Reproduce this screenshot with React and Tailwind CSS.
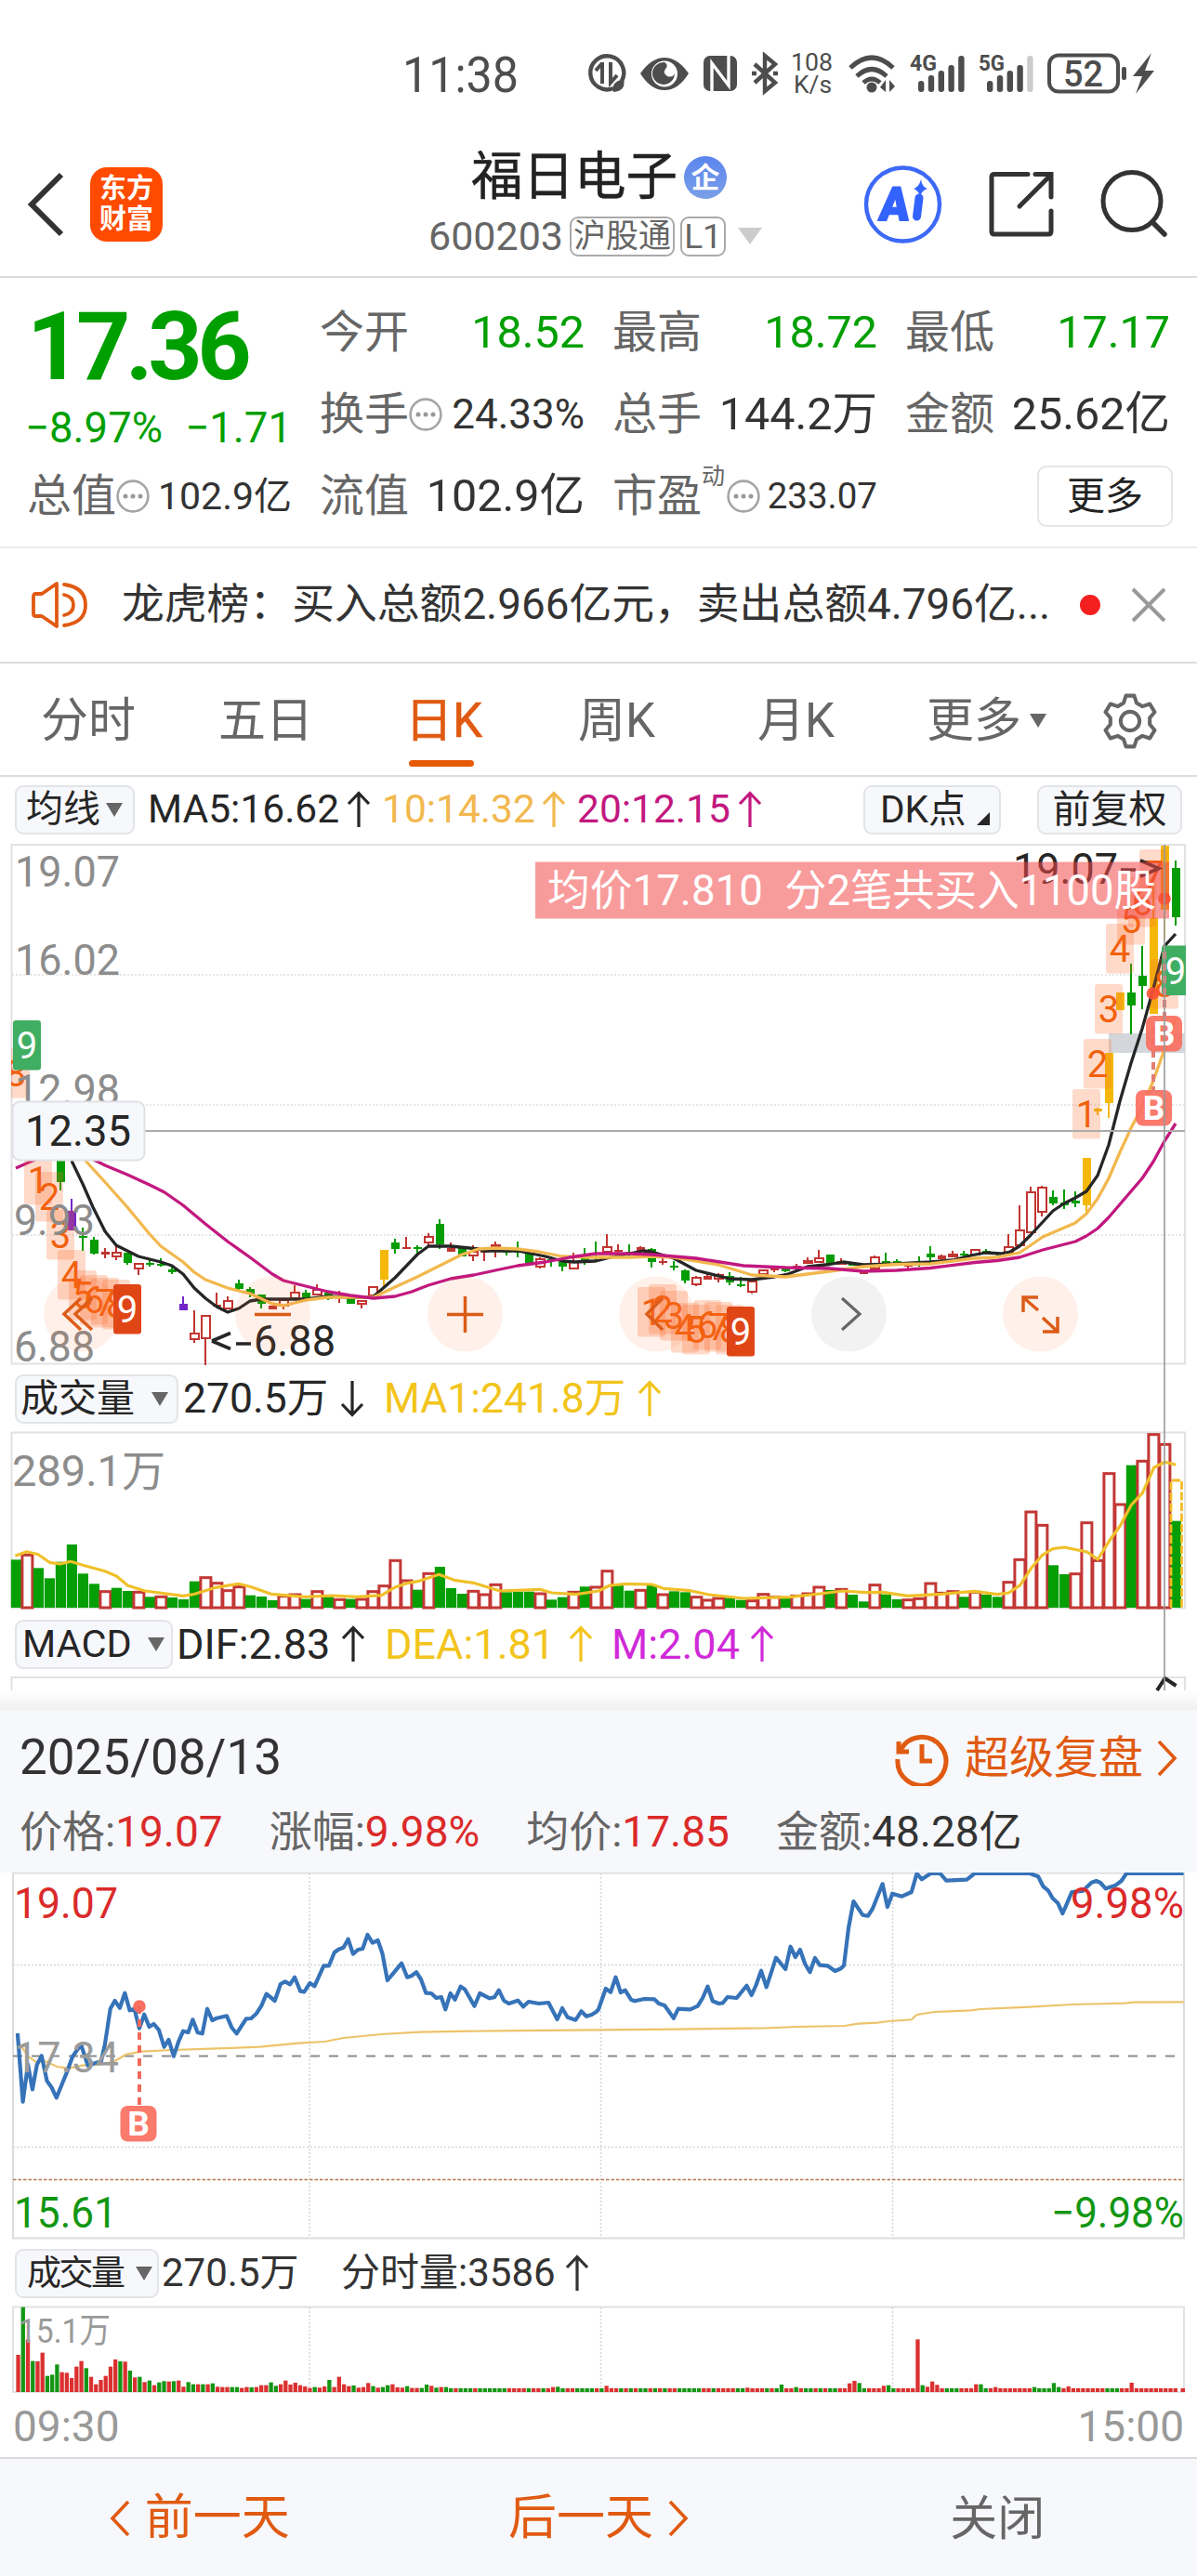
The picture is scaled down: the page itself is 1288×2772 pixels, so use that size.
import React from "react";

const FONT = "[font-family:Roboto,'Noto_Sans_CJK_SC',sans-serif]";

/* ---------- small pieces ---------- */

const Caret = ({ className = "" }) => (
  <svg className={className} width="18" height="15" viewBox="0 0 18 15">
    <path d="M0 0H18L9 15Z" fill="#666" />
  </svg>
);

const Arrow = ({ down, className = "" }) => (
  <svg className={className} width="26" height="40" viewBox="0 0 26 40" fill="none" stroke="currentColor" strokeWidth="3.2">
    {down ? <path d="M13 1V37M2 26L13 37.5L24 26" /> : <path d="M13 39V3M2 14L13 2.5L24 14" />}
  </svg>
);

const Chevron = ({ left }) => (
  <svg width="22" height="40" viewBox="0 0 22 40" fill="none" stroke="#e05a12" strokeWidth="3.6">
    {left ? <path d="M20 2L3 20L20 38" /> : <path d="M2 2L19 20L2 38" />}
  </svg>
);

const Dots = () => (
  <svg width="36" height="36" viewBox="0 0 36 36" className="shrink-0">
    <circle cx="18" cy="18" r="16.4" fill="none" stroke="#a5a5a5" strokeWidth="2.6" />
    <circle cx="10" cy="18" r="2.5" fill="#999" />
    <circle cx="18" cy="18" r="2.5" fill="#999" />
    <circle cx="26" cy="18" r="2.5" fill="#999" />
  </svg>
);

const Chip = ({ className = "", children }) => (
  <div className={"flex items-center rounded-[9px] border-2 border-[#e2e4e8] bg-[#f7f8fb] text-[#262626] " + className}>
    {children}
  </div>
);

/* ---------- status bar and header ---------- */

function Signal({ x, last }) {
  const tops = [87, 81, 76, 70, 60];
  return tops.map((t, i) => (
    <rect key={i} x={x + i * 10.8} y={t} width="6.4" height={99 - t} rx="3" fill={i === 4 && last ? last : "#4d4d4d"} />
  ));
}

function StatusBar() {
  return (
    <div className="flex h-[130px] w-full">
      <svg width="1288" height="130" viewBox="0 0 1288 130" fontFamily="Roboto, sans-serif" fill="#4d4d4d">
        <text x="433" y="99" fontSize="53" textLength="125" lengthAdjust="spacingAndGlyphs">11:38</text>
        <g fill="none" stroke="#4d4d4d" strokeWidth="4.4">
          <path d="M660 95A18 18 0 1 1 669 87" />
          <path d="M648 67V90M648 68L641 76M657 67V89L664 81" strokeWidth="4" />
        </g>
        <path d="M660 99Q657 88 671 85Q674 98 660 99Z" />
        <path d="M689 79Q701 62 715 62T741 79Q730 97 715 97T689 79Z" />
        <circle cx="715" cy="79.500" r="14" fill="#fff" />
        <path d="M715 67A12 12 0 1 0 726 79Q724 84 718 82Q712 78 717 73Q719 69 715 67Z" />
        <rect x="757" y="60" width="36" height="38" rx="7" />
        <path d="M766 98V68L784 92V60" fill="none" stroke="#fff" strokeWidth="3.4" />
        <path d="M812 69L834 89L823 98V60L834 69L812 89M809 79H814M832 79H837" fill="none" stroke="#4d4d4d" strokeWidth="4.4" />
        <text x="851" y="76" fontSize="25.500" textLength="45" lengthAdjust="spacingAndGlyphs">108</text>
        <text x="854" y="100" fontSize="25" textLength="41" lengthAdjust="spacingAndGlyphs">K/s</text>
        <g fill="none" stroke="#4d4d4d" strokeWidth="5">
          <path d="M915 73Q938 51 961 73" />
          <path d="M922 82Q938 67 954 82" />
          <path d="M929 89Q938 81 947 89" />
        </g>
        <circle cx="938" cy="94" r="5.500" />
        <path d="M947 94L953 86V99ZM957 86V99L963 93Z" />
        <text x="979" y="76" fontSize="23" fontWeight="700" textLength="29" lengthAdjust="spacingAndGlyphs">4G</text>
        <Signal x={988} />
        <text x="1053" y="76" fontSize="23" fontWeight="700" textLength="28" lengthAdjust="spacingAndGlyphs">5G</text>
        <Signal x={1062} last="#cccccc" />
        <rect x="1129" y="59.500" width="74" height="39" rx="10" fill="none" stroke="#4d4d4d" strokeWidth="4" />
        <text x="1144" y="93" fontSize="38" fontWeight="500" textLength="43" lengthAdjust="spacingAndGlyphs">52</text>
        <rect x="1207" y="72" width="5" height="14" rx="2" />
        <path d="M1239 57L1219 82H1229L1222 101L1242 76H1232Z" />
      </svg>
    </div>
  );
}

function Header() {
  return (
    <div className="flex h-[169px] items-center border-b-2 border-[#dcdcdc]">
      <svg className="mt-[12px] ml-[28px]" width="42" height="70" viewBox="0 0 42 70" fill="none" stroke="#333" strokeWidth="6">
        <path d="M38 3L6 35L38 67" />
      </svg>
      <div className="mt-[12px] ml-[27px] flex h-[80px] w-[78px] flex-col items-center justify-center rounded-[18px] bg-[#ff4b00] text-[29px] leading-[33px] font-bold text-white">
        <span>东方</span>
        <span>财富</span>
      </div>
      <div className="ml-[286px] flex w-[365px] flex-col">
        <div className="mt-[4px] ml-[46px] flex h-[76px] items-center">
          <span className="text-[55.500px] leading-none text-[#222] [-webkit-text-stroke:0.5px_#222]">福日电子</span>
          <span className="ml-[7px] flex h-[46px] w-[46px] items-center justify-center rounded-full bg-linear-to-b from-[#5b85ee] to-[#7a9fe6] text-[31px] leading-none font-bold text-white">企</span>
        </div>
        <div className="mt-[1px] flex h-[48px] items-center text-[#666]">
          <span className="text-[43px] leading-none">600203</span>
          <span className="ml-[7px] flex h-[43px] w-[113px] items-center justify-center rounded-[9px] border-2 border-[#aaa] text-[35px] leading-none">沪股通</span>
          <span className="ml-[6px] flex h-[43px] w-[49px] items-center justify-center rounded-[9px] border-2 border-[#aaa] text-[37px] leading-none">L1</span>
          <svg className="ml-[13px]" width="26" height="18" viewBox="0 0 26 18"><path d="M0 0H26L13 18Z" fill="#ccc" /></svg>
        </div>
      </div>
      <svg className="mt-[12px] ml-[101px]" width="340" height="90" viewBox="925 175 340 90" fill="none">
        <circle cx="969.500" cy="220" r="39.500" stroke="#3d69f6" strokeWidth="4.400" />
        <text transform="translate(943 237) skewX(-6)" fontSize="50" fontWeight="900" fill="#3363ff" stroke="#3363ff" strokeWidth="2" strokeLinejoin="round" fontFamily="Roboto, sans-serif" textLength="32" lengthAdjust="spacingAndGlyphs">A</text>
        <path d="M987 213L984.500 233" stroke="#3363ff" strokeWidth="9" strokeLinecap="round" />
        <path d="M989 193Q990 201 996 203Q990 205 988 211Q986 205 981 203Q987 201 989 193Z" fill="#3363ff" />
        <path d="M1104 187.500H1068Q1065 187.500 1065 190.500V249Q1065 252 1068 252H1126Q1129 252 1129 249V227M1112 187.500H1129V212M1129 188L1095 222" stroke="#333" strokeWidth="5" strokeLinecap="round" />
        <circle cx="1216" cy="216.500" r="31" stroke="#333" strokeWidth="5" />
        <path d="M1238 239L1251 252" stroke="#333" strokeWidth="5.500" strokeLinecap="round" />
      </svg>
    </div>
  );
}

/* ---------- quote ---------- */

const Label = ({ children }) => <span className="text-[48px] leading-none text-[#666]">{children}</span>;
const Row = ({ children, className = "" }) => <div className={"flex h-[88px] items-center justify-between " + className}>{children}</div>;

function Quote() {
  return (
    <div className="grid h-[291px] grid-cols-4 gap-x-[30px] border-b-2 border-[#ececec] px-[29px] pt-[15px] text-[48.500px] leading-none text-[#333]">
      <div className="flex flex-col">
        <div className="flex h-[118px] items-center text-[102px] font-bold tracking-[-5.500px] text-[#009f00]">
          <span>17.36</span>
        </div>
        <div className="-ml-[2px] flex h-[58px] items-center justify-between text-[45.500px] text-[#009f00]">
          <span>−8.97%</span>
          <span>−1.71</span>
        </div>
        <Row>
          <div className="flex items-center"><Label>总值</Label><Dots /></div>
          <span className="text-[41px]">102.9亿</span>
        </Row>
      </div>
      <div className="flex flex-col">
        <Row><Label>今开</Label><span className="text-[#009f00]">18.52</span></Row>
        <Row>
          <div className="flex items-center"><Label>换手</Label><Dots /></div>
          <span className="text-[44px]">24.33%</span>
        </Row>
        <Row><Label>流值</Label><span>102.9亿</span></Row>
      </div>
      <div className="flex flex-col">
        <Row><Label>最高</Label><span className="text-[#009f00]">18.72</span></Row>
        <Row><Label>总手</Label><span>144.2万</span></Row>
        <Row>
          <div className="flex items-center">
            <Label>市盈</Label>
            <span className="mt-[-44px] mr-[2px] text-[25px] text-[#666]">动</span>
            <Dots />
          </div>
          <span className="text-[38.500px]">233.07</span>
        </Row>
      </div>
      <div className="flex flex-col">
        <Row><Label>最低</Label><span className="text-[#009f00]">17.17</span></Row>
        <Row><Label>金额</Label><span>25.62亿</span></Row>
        <Row className="justify-end">
          <span className="ml-auto -mr-[3px] flex h-[66px] w-[146px] items-center justify-center rounded-[10px] border-2 border-[#e6e6e6] text-[41px] text-[#222]">更多</span>
        </Row>
      </div>
    </div>
  );
}

function Notice() {
  return (
    <div className="flex h-[124px] items-center border-b-2 border-[#dcdcdc] text-[#333]">
      <svg className="ml-[33px] shrink-0" width="62" height="52" viewBox="0 0 62 52" fill="none" stroke="#e05a12" strokeWidth="3.800" strokeLinejoin="round">
        <path d="M28 3L12 14H5Q3 14 3 17V35Q3 38 5 38H12L28 49Z" />
        <path d="M36 4Q59 7 59 26T36 48M36 15Q46 17 46 26T36 37" strokeLinecap="round" />
      </svg>
      <span className="ml-[36px] w-[1000px] text-[45.800px] leading-none whitespace-nowrap">龙虎榜：买入总额2.966亿元，卖出总额4.796亿...</span>
      <span className="ml-[31px] h-[22px] w-[22px] rounded-full bg-[#f42020]" />
      <svg className="ml-[33px]" width="38" height="38" viewBox="0 0 38 38" stroke="#999" strokeWidth="4"><path d="M2 2L36 36M36 2L2 36" /></svg>
    </div>
  );
}

const GEAR = "M29 3H39L42 12L49 16L58 13L64 23L58 30V38L64 45L58 55L49 52L42 56L39 65H29L26 56L19 52L10 55L4 45L10 38V30L4 23L10 13L19 16L26 12Z";

function Tabs() {
  return (
    <div className="flex h-[122px] items-center border-b-2 border-[#dcdcdc] pt-[3px] pl-[44px] text-[51px] leading-none text-[#666]">
      <span className="w-[191px]">分时</span>
      <span className="w-[201px]">五日</span>
      <div className="relative w-[186px] text-[#e05a12] [-webkit-text-stroke:0.6px_#e05a12]">
        日K
        <span className="absolute top-[68px] left-[4px] h-[7px] w-[70px] rounded-full bg-[#e65a06]" />
      </div>
      <span className="w-[193px]">周K</span>
      <span className="w-[182px]">月K</span>
      <span>更多</span>
      <Caret className="ml-[9px]" />
      <svg className="ml-[56px]" width="68" height="60" viewBox="0 0 68 68" fill="none" stroke="#666" strokeWidth="4.600" strokeLinejoin="round">
        <path d={GEAR} />
        <circle cx="34" cy="34" r="11.500" />
      </svg>
    </div>
  );
}

/* ---------- daily candles ---------- */

// [kind, body top, body bottom, high, low]; kinds: r rising, g falling, y limit-up, p limit-down, s solid red
const CANDLES = [
  ["g",1248,1272,1248,1281],["p",1303,1324,1290,1324],["g",1330,1332,1321,1346],["g",1334,1349,1331,1350],["s",1347,1350,1343,1354],
  ["r",1347,1353,1341,1356],["g",1348,1359,1348,1361],["r",1359,1366,1359,1372],["g",1358.5,1361,1355,1363],["g",1359.5,1362,1354,1363],
  ["g",1366,1369,1363,1371],["p",1403,1410,1395,1410],["r",1434,1442,1410,1445],["r",1415,1441,1415,1469],["s",1404,1406,1391,1406],
  ["r",1399,1409,1395,1409],["g",1381,1387,1377,1388],["g",1387,1392,1385,1396],["g",1393,1403,1393,1408],["s",1405,1409,1405,1409],
  ["r",1398,1406,1398,1409],["r",1390,1398,1383,1398],["g",1391,1397,1388,1397],["r",1387,1394,1382,1394],["g",1391,1398,1391,1399],
  ["s",1395,1397,1389,1402],["g",1397,1403,1397,1403],["r",1399,1404,1399,1408],["r",1384,1395,1384,1395],["y",1345,1377,1345,1384],
  ["g",1337,1344,1333,1349],["s",1342,1344,1331,1344],["g",1342,1344,1340,1349],["r",1330,1338,1327,1340],["g",1317,1339,1312,1344],
  ["s",1343,1347,1337,1347],["g",1343,1352,1343,1352],["r",1346,1352,1340,1357],["s",1346,1348,1346,1357],["r",1339,1343,1336,1353],
  ["g",1346,1348,1344,1351],["g",1346,1348,1336,1353],["g",1348,1359,1348,1359],["r",1354,1364,1353,1365],["g",1355,1357,1352,1363],
  ["g",1358,1363,1356,1368],["r",1357,1366,1348,1366],["g",1354,1358,1343,1361],["g",1352,1354,1336,1356],["r",1341,1348,1328,1348],
  ["s",1345,1347,1339,1350],["g",1347,1349,1339,1352],["s",1342,1347,1341,1347],["g",1344,1358,1343,1364],["s",1357,1359,1353,1361],
  ["g",1362,1364,1357,1367],["g",1367,1378,1366,1381],["r",1374,1383,1373,1384],["s",1373,1377,1371,1377],["r",1371,1377,1370,1380],
  ["g",1373,1380,1369,1383],["g",1382,1384,1374,1385],["r",1378,1391,1378,1392],["r",1366,1372,1366,1372],["s",1365,1367,1364,1369],
  ["g",1365,1368,1364,1369],["s",1362,1365,1360,1365],["r",1356,1360,1353,1360],["r",1353,1359,1345,1359],["g",1350,1359,1350,1359],
  ["r",1357,1361,1354,1361],["g",1360,1362,1360,1362],["s",1367,1371,1367,1371],["r",1352,1366,1351,1366],["g",1357,1359,1348,1360],
  ["g",1357,1359,1355,1361],["s",1361,1363,1361,1366],["g",1358,1360,1352,1363],["g",1349,1353,1341,1357],["s",1351,1355,1350,1357],
  ["r",1349,1353,1346,1353],["g",1349,1351,1346,1354],["r",1344,1351,1344,1351],["g",1346,1348,1344,1350],["g",1348,1350,1347,1351],
  ["r",1341,1349,1328,1349],["r",1323,1341,1297,1341],["r",1282,1327,1277,1327],["r",1277,1305,1276,1309],["g",1288,1295,1281,1297],
  ["g",1294,1297,1280,1301],["g",1292,1295,1282,1299],["y",1246,1297,1246,1304],["y",1192.5,1195.500,1192,1200],["y",1133,1187,1133,1203],
  ["y",1068,1086.500,1068,1086],["g",1068,1082,1037,1113],["g",1050,1061,1018,1086],["y",988,1090.500,950,1090],["y",910,979,910,1011],
  ["g",934,987,926,996],
];
const KIND = { r: "#c23531", s: "#c23531", g: "#049c04", y: "#f5b80a", p: "#7426c9" };

function Candle({ i, c }) {
  const [k, t, b, h, l] = c;
  const x = 65.3 + 12 * i;
  const col = KIND[k];
  return (
    <g fill={col} shapeRendering="crispEdges">
      {k === "r" ? (
        <>
          <rect x={x - 1} y={h} width="2" height={Math.max(0, t - h)} />
          <rect x={x - 1} y={b} width="2" height={Math.max(0, l - b)} />
          <rect x={x - 4.4} y={t + 1} width="9" height={Math.max(2, b - t - 2)} fill="none" stroke={col} strokeWidth="2" />
        </>
      ) : (
        <>
          <rect x={x - 1} y={h} width="2" height={Math.max(1, l - h)} />
          <rect x={x - 4.5} y={t} width="9" height={b - t} />
        </>
      )}
    </g>
  );
}

const MA5 = "77,1249 89,1274 100,1299 113,1325 125,1340 149,1352 173,1358 185,1362 197,1371 209,1386 221,1397 233,1406 245,1412 257,1408 269,1400 281,1398 329,1398 353,1395 377,1396 401,1396 425,1375 449,1350 461,1341 485,1341 515,1344 520,1346 557,1346 587,1352 605,1357 618,1358 641,1357 657,1353 677,1349 692,1346 701,1347 725,1354 749,1367 785,1376 809,1377 833,1374 848,1371 869,1363 893,1360.500 907,1358 929,1361 965,1360 1001,1358 1025,1356 1047,1350.500 1061,1348 1077,1349 1087,1347 1097,1341 1109,1329 1122,1315 1133,1303 1145,1295 1157,1289 1169,1282 1181,1265 1193,1232 1205,1185 1217,1144 1229,1107 1241,1064 1253,1018 1265,1005";
const MA10 = "92,1249 113,1272 137,1299 161,1328 173,1341 197,1358 209,1369 221,1377 245,1386 269,1392 293,1403 305,1405 329,1399 353,1396 377,1396 402,1396 425,1385 449,1374 473,1362 497,1350 515,1344 533,1343 557,1344 580,1347 605,1352 633,1353 677,1353 701,1352 725,1353 749,1357 773,1361 809,1372 845,1374 893,1368 929,1363 965,1360.500 1001,1360 1025,1357 1049,1354 1073,1353 1097,1348 1109,1340 1122,1331 1157,1316 1169,1306 1181,1290 1193,1268 1205,1240 1217,1214 1229,1191 1241,1163 1253,1129 1265,1096";
const MA20 = "17,1257 35,1249 60,1240 90,1242 103,1249 113,1254 137,1264 161,1275 177,1283 197,1297 221,1317 245,1336 269,1353 293,1371 305,1378 329,1384 353,1390 377,1394 402,1397 425,1395 443,1390 461,1383 485,1376 510,1372 533,1367 557,1362 587,1358 613,1353 641,1349 677,1349 701,1350 749,1354 800,1362 845,1364 893,1365 929,1368 965,1367 1001,1364.500 1049,1358.500 1073,1356.500 1097,1353 1122,1345 1157,1336 1169,1330 1181,1322 1193,1310 1205,1296 1229,1268 1241,1250 1253,1228 1265,1209";

const TAGS = [
  [2,1128,8],[26,1243,1],[38,1261,2],[50,1302,3],[62,1345,4],[74,1367,5],[86,1372,6],[98,1375,7],[110,1377,8],
  [686,1385,1],[698,1382,2],[710,1389,3],[722,1402,4],[734,1404,5],[746,1399,6],[758,1401,7],[770,1404,8],
  [1154,1172,1],[1166,1118,2],[1178,1059,3],[1190,994,4],[1202,963,5],[1214,944,6],[1226,914,7],[1238,1032,8],
];

const Tag = ({ x, y, n, fill }) => (
  <g>
    <rect x={x} y={y} width="30" height="53.500" rx="3" fill={fill || "#fa6a2c"} fillOpacity={fill ? 1 : 0.25} />
    <text x={x + 15} y={y + 41} textAnchor="middle" fontSize="40" fill={fill ? "#fff" : "#f2600c"}>{n}</text>
  </g>
);

const Buy = ({ x, y }) => (
  <g>
    <rect x={x} y={y} width="39" height="38.500" rx="8" fill="#fa6f60" fillOpacity="0.92" />
    <text x={x + 19.5} y={y + 32} textAnchor="middle" fontSize="37" fontWeight="700" fill="#fff">B</text>
  </g>
);

const AxisText = ({ x, y, w, fill = "#8c8c8c", size = 46, children }) => (
  <text x={x} y={y} fontSize={size} fill={fill} textLength={w} lengthAdjust="spacingAndGlyphs">{children}</text>
);

const CHART_FONT = "Roboto, 'Noto Sans CJK SC', sans-serif";

function CandleChart() {
  return (
    <svg className="block" width="1288" height="569" viewBox="0 901 1288 569" fontFamily={CHART_FONT}>
      <defs>
        <clipPath id="kclip"><rect x="12" y="908" width="1264" height="561" /></clipPath>
      </defs>
      <rect x="12.500" y="909" width="1262.500" height="558.500" fill="none" stroke="#e2e2e2" strokeWidth="2" />
      {[1049, 1189, 1329].map((y) => (
        <path key={y} d={"M13 " + y + "H1275"} stroke="#dedede" strokeWidth="1.500" strokeDasharray="2 2" />
      ))}
      <g clipPath="url(#kclip)">
        <rect x="1193" y="1112" width="82" height="21" fill="#d3d7dc" />
        {CANDLES.map((c, i) => <Candle key={i} i={i} c={c} />)}
        <g fill="none" strokeWidth="3.300" strokeLinejoin="round">
          <polyline points={MA5} stroke="#262626" />
          <polyline points={MA10} stroke="#f2b84e" />
          <polyline points={MA20} stroke="#c2187f" />
        </g>
        {TAGS.map(([x, y, n], i) => <Tag key={i} x={x} y={y} n={n} />)}
        <Tag x={14} y={1098} n={9} fill="#3fae62" />
        <Tag x={122} y={1382} n={9} fill="#e04516" />
        <Tag x={782} y={1406} n={9} fill="#e04516" />
        <Tag x={1250} y={1017.500} n={9} fill="#3fae62" />
      </g>
      <AxisText x={16} y={953.500} w={113}>19.07</AxisText>
      <AxisText x={16} y={1049} w={113}>16.02</AxisText>
      <AxisText x={16} y={1188.500} w={113}>12.98</AxisText>
      <AxisText x={15} y={1328.500} w={87}>9.93</AxisText>
      <AxisText x={15} y={1465} w={87}>6.88</AxisText>
      <path d="M228 1443L248 1434.500M228 1443L248 1451.500M254 1446H270" stroke="#262626" strokeWidth="3.600" fill="none" />
      <AxisText x={273} y={1459} w={88} fill="#262626">6.88</AxisText>
      <AxisText x={1090} y={950.500} w={113} fill="#262626">19.07</AxisText>
      <path d="M1206 936H1222M1227 926L1247 934.500L1227 943" stroke="#262626" strokeWidth="3.600" fill="none" />
      <rect x="576" y="927.500" width="682" height="61" fill="#f24848" fillOpacity="0.55" />
      <g fill="#fff" fontSize="46">
        <text x="589" y="974" textLength="232" lengthAdjust="spacingAndGlyphs">均价17.810</text>
        <text x="844" y="974" textLength="400" lengthAdjust="spacingAndGlyphs">分2笔共买入1100股</text>
      </g>
      <circle cx="1253" cy="967" r="6.800" fill="#fa4f36" fillOpacity="0.9" />
      <circle cx="1240.500" cy="1069" r="6.800" fill="#fa4f36" fillOpacity="0.9" />
      <path d="M1253 1024V1093M1241 1104V1173" stroke="#e27e72" strokeWidth="4" strokeDasharray="8 5" />
      <Buy x={1233} y={1093} />
      <Buy x={1222} y={1173} />

      <g fill="#fb6a28" fillOpacity="0.1">
        <circle cx="87.500" cy="1414" r="40.500" />
        <circle cx="293.500" cy="1414" r="40.500" />
        <circle cx="500.500" cy="1414" r="40.500" />
        <circle cx="706.500" cy="1414" r="40.500" />
        <circle cx="1119.500" cy="1414" r="40.500" />
      </g>
      <circle cx="913.500" cy="1414" r="40.500" fill="#f2f2f2" />
      <g fill="none" stroke="#dc5c18" strokeWidth="3.500">
        <path d="M87 1397L69 1414L87 1431M99 1397L81 1414L99 1431" />
        <path d="M274 1414.500H313" />
        <path d="M481 1414.500H520M500.500 1395V1434" />
        <path d="M713 1397L696 1414L713 1431" />
        <path d="M1117 1396H1101V1412M1102 1397L1117 1410M1122 1433H1138V1417M1137 1432L1122 1418" />
      </g>
      <path d="M906 1397L925 1414L906 1431" fill="none" stroke="#666" strokeWidth="3.200" />

      <path d="M155 1217H1275" stroke="#ababab" strokeWidth="2" />
      <rect x="13.500" y="1185.500" width="142" height="63" rx="8" fill="#f7f8fb" stroke="#dfe1e5" strokeWidth="2" />
      <AxisText x={27} y={1233} w={114} fill="#262626">12.35</AxisText>
    </svg>
  );
}

/* ---------- daily volume ---------- */

const VOL = "g655 r637 g682 g715 g662 g606 g700 g733 r755 g746 g756 r757 g775 r772 g777 g783 g725 r710 r728 r752 r740 g770 g774 g786 r770 r765 g782 r755 g775 r781 g782 r780 r755 r737 r655 r720 g752 r697 g678 g747 g765 r754 r765 r733 g760 g758 g758 r762 g784 g776 r757 g742 r741 r689 g738 g755 r751 g737 r765 g757 g760 r773 r783 r777 g778 g785 r785 r764 r773 g780 r769 r762 r741 g753 r748 g768 g790 r734 g767 g783 r782 r778 r729 r760 r755 g775 r757 g768 g775 r725 r652 r498 r541 g673 g702 r698 r533 r655 r374 r474 g350 r334 r248 r280 g530".split(" ");
const VMA_L = [[40,643],[70,629],[100,638],[130,664],[157,669],[185,661],[215,672],[275,692],[305,708],[335,739],[380,756],[480,772],[510,766],[565,745],[625,733],[660,744],[710,766],[800,775],[870,771],[935,775],[1000,770],[1035,744],[1070,730],[1095,725],[1150,703],[1190,721],[1240,730],[1310,756],[1415,751],[1445,762],[1510,767],[1568,756]];
const VMA_R = [[30,738],[75,733],[140,735],[170,748],[240,755],[290,768],[380,780],[500,776],[580,765],[640,756],[700,761],[745,760],[810,772],[900,766],[985,757],[1045,767],[1075,762],[1105,737],[1135,680],[1163,640],[1190,620],[1220,615],[1280,630],[1308,654],[1338,595],[1367,545],[1396,478],[1425,440],[1455,358],[1484,340],[1513,349]];

const scaled = (pts, ox, oy) => pts.map(([x, y]) => (ox + x / 2.4348).toFixed(1) + "," + (oy + y / 3).toFixed(1)).join(" ");

function VolumeChart() {
  return (
    <svg className="block" width="1288" height="192" viewBox="0 1540 1288 192" fontFamily={CHART_FONT}>
      <rect x="12.500" y="1541.500" width="1262.500" height="189" fill="none" stroke="#e2e2e2" strokeWidth="2" />
      <AxisText x={13} y={1599} w={165}>289.1万</AxisText>
      {VOL.map((v, j) => {
        const x = 17.3 + 12 * j;
        const top = 1460 + Number(v.slice(1)) / 3;
        return v[0] === "g" ? (
          <rect key={j} x={x - 5.5} y={top} width="11.200" height={1730 - top} fill="#059f05" />
        ) : (
          <rect key={j} x={x - 5.4} y={top + 1} width="11" height={1729 - top} fill="#fff" stroke="#c23735" strokeWidth="3" />
        );
      })}
      <path d="M1260 1730V1593H1271.500V1730" fill="none" stroke="#f2bd25" strokeWidth="2.800" strokeDasharray="9 2.500" />
      <polyline points={scaled(VMA_L, 0, 1460) + " " + scaled(VMA_R, 644, 1460)} fill="none" stroke="#f0c02a" strokeWidth="3.200" strokeLinejoin="round" />
    </svg>
  );
}

/* ---------- intraday ---------- */

const MIN_L = [[46,564],[60,785],[73,665],[85,745],[97,665],[109,637],[123,718],[135,738],[148,772],[175,690],[190,640],[212,600],[230,668],[250,660],[265,655],[275,600],[289,485],[301,459],[314,482],[327,434],[340,490],[352,485],[365,548],[378,503],[391,543],[403,534],[416,553],[430,608],[442,585],[455,638],[468,590],[480,557],[493,561],[505,520],[518,562],[530,565],[543,485],[556,522],[568,515],[594,508],[607,545],[620,565],[645,517],[658,516],[672,500],[685,475],[698,437],[720,459],[735,405],[747,397],[760,406],[772,383],[787,428],[797,430],[812,402],[824,412],[848,346],[862,346],[876,303],[887,293],[900,287],[912,260],[925,308],[938,294],[950,291],[963,246],[976,272],[990,264],[1002,307],[1015,393],[1028,374],[1052,338],[1067,383],[1078,379],[1091,367],[1103,390],[1116,434],[1130,435],[1143,450],[1156,447],[1167,487],[1180,435],[1192,455],[1207,413],[1218,422],[1243,476],[1257,435],[1283,451],[1295,448],[1307,425],[1320,458],[1333,468],[1357,458],[1371,478],[1385,462],[1412,468],[1437,465],[1460,519],[1473,483],[1487,512],[1508,521],[1523,493],[1536,509],[1550,504],[1562,495]];
const MIN_R = [[0,487],[19,420],[32,431],[45,383],[58,432],[70,425],[85,455],[95,460],[120,453],[146,454],[158,468],[173,474],[197,515],[209,485],[240,487],[260,476],[273,450],[286,413],[299,460],[315,468],[326,466],[338,447],[362,450],[388,410],[401,441],[413,408],[426,362],[440,415],[452,370],[465,320],[490,357],[503,284],[516,318],[528,294],[541,340],[554,367],[567,321],[580,344],[600,346],[620,363],[635,355],[643,345],[655,225],[668,138],[692,182],[706,185],[718,162],[744,82],[757,156],[770,113],[795,122],[820,108],[834,48],[847,67],[870,48],[895,48],[911,71],[965,68],[985,48],[1130,48],[1152,58],[1165,90],[1178,103],[1190,128],[1203,143],[1216,177],[1229,140],[1240,108],[1268,105],[1292,77],[1304,72],[1315,78],[1329,97],[1355,86],[1370,72],[1383,48],[1533,48]];
const AVG_L = [[52,600],[75,640],[95,657],[120,655],[150,672],[180,677],[215,668],[260,665],[300,655],[330,632],[370,623],[450,618],[550,614],[680,608],[780,596],[850,591],[900,579],[1000,567],[1100,560],[1300,556],[1568,553]];
const AVG_R = [[200,551],[440,547],[520,543],[645,540],[680,533],[730,530],[760,525],[820,520],[834,504],[880,495],[975,490],[1000,486],[1130,479],[1240,471],[1380,467],[1400,464],[1533,463]];

function IntradayChart() {
  return (
    <svg className="block" width="1288" height="396" viewBox="0 2015 1288 396" fontFamily={CHART_FONT}>
      <g fill="none" stroke="#d6d6d6" strokeWidth="1.500" strokeDasharray="2 2">
        <path d="M14 2114.500H1274M14 2310.500H1274M333 2016V2408M646.500 2016V2408M960.500 2016V2408" />
      </g>
      <rect x="14" y="2015.500" width="1260" height="393" fill="none" stroke="#dcdcdc" strokeWidth="2" />
      <path d="M14 2212.500H1274" stroke="#8c8c8c" strokeWidth="2" strokeDasharray="10 10" />
      <path d="M14 2345.500H1274" stroke="#b8764c" strokeWidth="1.500" strokeDasharray="3.500 2" />
      <polyline points={scaled(AVG_L, 0, 2000) + " " + scaled(AVG_R, 644, 2000)} fill="none" stroke="#edc36a" strokeWidth="2.200" />
      <polyline points={scaled(MIN_L, 0, 2000) + " " + scaled(MIN_R, 644, 2000)} fill="none" stroke="#3673b8" strokeWidth="4.200" strokeLinejoin="round" />
      <AxisText x={15} y={2064} w={112} fill="#db2a2a">19.07</AxisText>
      <AxisText x={15} y={2230} w={113} fill="#9b9b9b">17.34</AxisText>
      <AxisText x={15} y={2397} w={111} fill="#129612">15.61</AxisText>
      <AxisText x={1152} y={2064} w={122} fill="#db2a2a">9.98%</AxisText>
      <AxisText x={1131} y={2397} w={143} fill="#129612">−9.98%</AxisText>
      <circle cx="150" cy="2159" r="6.800" fill="#fa6f60" />
      <path d="M150 2159V2266" stroke="#ef6a5c" strokeWidth="4" strokeDasharray="8 6" />
      <Buy x={129.500} y={2266} />
    </svg>
  );
}

const MV_HEAD = "r372 g218 r322 g392 r393 r365 g440 g436 g403 r428 r430 r447 r410 r392 g415 r443 r467 r453 r440 r410 r387 g393 r394 g423 r445 g443 r460 g455 r470 g461 g457 r458 g457 r455 r475 g460 g467 r467 g467 r467 g464 r475 r476 r476 g476 g476 r479 r476 g477 r476 r470 r470 g461 g472 r467 r455 r468 r462 r470 r474 r479 g476 r478 r474 g453 r476 r443 r467 r473 g471 r478 r476 r463 g473 r478 g476 g470 r467 r477 r478 g473 r479 r479 g479 g468 r472 g478 r476 g476".split(" ");
const MV_EXTRA = { 110: "r476", 111: "g475", 121: "r472", 150: "r478", 157: "g468", 160: "g476", 171: "r464", 172: "r456", 173: "g463", 178: "r472", 179: "g470", 185: "r322", 186: "g470", 187: "r475", 188: "r458", 189: "r469", 197: "r467", 198: "g467", 201: "r476", 209: "g476", 213: "g463", 214: "g476", 216: "r474", 229: "r462" };
const MV_COLORS = "grgggrggggggrrrrgrrgrrrgrrggggrgrrrgrgrggrgrgrrgggggrrgrrrrggrrrrgrgrrrgrggrgrggrrrrggrrrgrgrrrrgrrrrrgggrrrrrgrgrrrrrrrgggggrrgrrrrrrrgggrrrrrrrrrrrrr";

function MinuteVolume() {
  const bars = [];
  for (let k = 0; k < 239; k++) {
    const v = MV_HEAD[k] || MV_EXTRA[k] || MV_COLORS[(k - MV_HEAD.length) % MV_COLORS.length] + "480";
    const top = 2410 + Number(v.slice(1)) / 3;
    bars.push(<rect key={k} x={17.4 + k * 5.232} y={top} width="4.300" height={2574 - top} fill={v[0] === "g" ? "#149614" : "#db3030"} />);
  }
  return (
    <svg className="block" width="1288" height="94" viewBox="0 2481 1288 94" fontFamily={CHART_FONT}>
      <rect x="14" y="2482.500" width="1260" height="91.500" fill="none" stroke="#e2e2e2" strokeWidth="2" />
      <path d="M333 2483V2573M646.500 2483V2573M960.500 2483V2573" stroke="#d6d6d6" strokeWidth="1.500" strokeDasharray="2 2" />
      {bars}
      <rect x="1270.500" y="2570" width="4.500" height="4" fill="#db3030" />
      <AxisText x={20} y={2521} w={99} size={37} fill="#9a9a9a">15.1万</AxisText>
    </svg>
  );
}

/* ---------- page ---------- */

function DailySection() {
  return (
    <div className="relative h-[1004px] overflow-hidden">
      <div className="flex h-[65px] items-center pt-[5px] text-[42.500px] leading-none">
        <Chip className="ml-[16px] h-[53px] w-[129px] shrink-0 pl-[10px] text-[40px]">均线<Caret className="ml-[6px]" /></Chip>
        <span className="ml-[14px] w-[214px] shrink-0 text-[#262626]">MA5:16.62</span>
        <Arrow className="text-[#262626]" />
        <span className="ml-[12px] w-[172px] shrink-0 text-[#f2b84e]">10:14.32</span>
        <Arrow className="text-[#f2b84e]" />
        <span className="ml-[12px] w-[173px] shrink-0 text-[#c2187f]">20:12.15</span>
        <Arrow className="text-[#c2187f]" />
        <Chip className="ml-[109px] h-[53px] w-[148px] shrink-0 pl-[16px] text-[40.500px]">
          DK点
          <svg className="mt-[20px] ml-[11px]" width="14" height="14" viewBox="0 0 14 14"><path d="M14 0V14H0Z" fill="#262626" /></svg>
        </Chip>
        <Chip className="ml-[39px] h-[53px] w-[156px] shrink-0 justify-center text-[41px]">前复权</Chip>
      </div>
      <CandleChart />
      <div className="flex h-[70px] items-center text-[44.500px] leading-none">
        <Chip className="ml-[16px] h-[53px] w-[176px] pl-[4px] text-[41px]">成交量<Caret className="ml-[18px]" /></Chip>
        <span className="ml-[5px] w-[164px] text-[#262626]">270.5万</span>
        <Arrow down className="ml-[5px] text-[#262626]" />
        <span className="ml-[21px] w-[270px] text-[#f2c41c]">MA1:241.8万</span>
        <Arrow className="ml-[3px] text-[#f2c41c]" />
      </div>
      <VolumeChart />
      <div className="flex h-[72px] items-center pt-[2px] text-[45px] leading-none">
        <Chip className="ml-[16px] h-[53px] w-[170px] pl-[6px] text-[41.500px]">MACD<Caret className="ml-[17px]" /></Chip>
        <span className="ml-[4px] w-[172px] text-[#262626]">DIF:2.83</span>
        <Arrow className="ml-[5px] text-[#262626]" />
        <span className="ml-[21px] w-[193px] text-[#f2c41c]">DEA:1.81</span>
        <Arrow className="ml-[5px] text-[#f2c41c]" />
        <span className="ml-[20px] w-[144px] text-[#d02ad8]">M:2.04</span>
        <Arrow className="ml-[5px] text-[#d02ad8]" />
      </div>
      <svg className="block" width="1288" height="36" viewBox="0 1804 1288 36">
        <defs>
          <linearGradient id="shade" x1="0" x2="0" y1="0" y2="1">
            <stop offset="0" stopColor="#fff" />
            <stop offset="1" stopColor="#f0f0f0" />
          </linearGradient>
        </defs>
        <path d="M12.500 1819V1805H1275V1819" fill="none" stroke="#e2e2e2" strokeWidth="2" />
        <path d="M1245 1819L1253.500 1806L1265.500 1814" fill="none" stroke="#262626" strokeWidth="4" />
        <rect x="0" y="1820" width="1288" height="20" fill="url(#shade)" />
      </svg>
      <div className="absolute top-[73px] left-[1252px] h-[910px] w-[2px] bg-[#999999]/80" />
    </div>
  );
}

const Stat = ({ label, value, className }) => (
  <div className="flex"><span className="text-[#666]">{label}:</span><span className={className}>{value}</span></div>
);

function DayDetail() {
  return (
    <div>
      <div className="h-[175px] bg-[#f7f8fb] leading-none">
        <div className="flex h-[103px] items-center pl-[21px]">
          <span className="w-[941px] text-[53px] text-[#333]">2025/08/13</span>
          <svg width="60" height="60" viewBox="0 0 60 60" fill="none" stroke="#e05a12" strokeWidth="5">
            <path d="M5 12V23H16" />
            <path d="M7 21A26 26 0 1 1 4 31" />
            <path d="M30 15V33H41" />
          </svg>
          <span className="mr-[15px] ml-[16px] text-[48px] text-[#e05a12]">超级复盘</span>
          <Chevron />
        </div>
        <div className="flex h-[56px] items-center gap-[50px] pl-[21px] text-[46px] whitespace-nowrap">
          <Stat label="价格" value="19.07" className="text-[#db2a2a]" />
          <Stat label="涨幅" value="9.98%" className="text-[#db2a2a]" />
          <Stat label="均价" value="17.85" className="text-[#db2a2a]" />
          <Stat label="金额" value="48.28亿" className="text-[#333]" />
        </div>
      </div>
      <IntradayChart />
      <div className="flex h-[70px] items-center text-[43px] leading-none text-[#333]">
        <Chip className="ml-[16px] h-[53px] w-[155px] pl-[11px]"><span className="text-[37px] tracking-[-2.500px]">成交量</span><Caret className="ml-[13px]" /></Chip>
        <span className="ml-[3px] w-[193px] text-[42px]">270.5万</span>
        <span className="text-[42px]">分时量:3586</span>
        <Arrow className="ml-[10px]" />
      </div>
      <MinuteVolume />
      <div className="flex h-[69px] items-center justify-between px-[14px] pt-[2px] text-[46px] leading-none text-[#999]">
        <span>09:30</span>
        <span>15:00</span>
      </div>
    </div>
  );
}

function BottomBar() {
  return (
    <div className="grid h-[128px] grid-cols-3 border-t-2 border-[#dcdcdc] bg-[#f7f8fb] text-[52px] leading-none text-[#e05a12]">
      <div className="flex items-center justify-center gap-[16px] pt-[2px]"><Chevron left /><span>前一天</span></div>
      <div className="flex items-center justify-center gap-[16px] pt-[2px]"><span>后一天</span><Chevron /></div>
      <div className="flex items-center justify-center pt-[2px] text-[51px] text-[#666]">关闭</div>
    </div>
  );
}

export default function App() {
  return (
    <div className={"w-[1288px] overflow-hidden bg-white " + FONT}>
      <StatusBar />
      <Header />
      <Quote />
      <Notice />
      <Tabs />
      <DailySection />
      <DayDetail />
      <BottomBar />
    </div>
  );
}
